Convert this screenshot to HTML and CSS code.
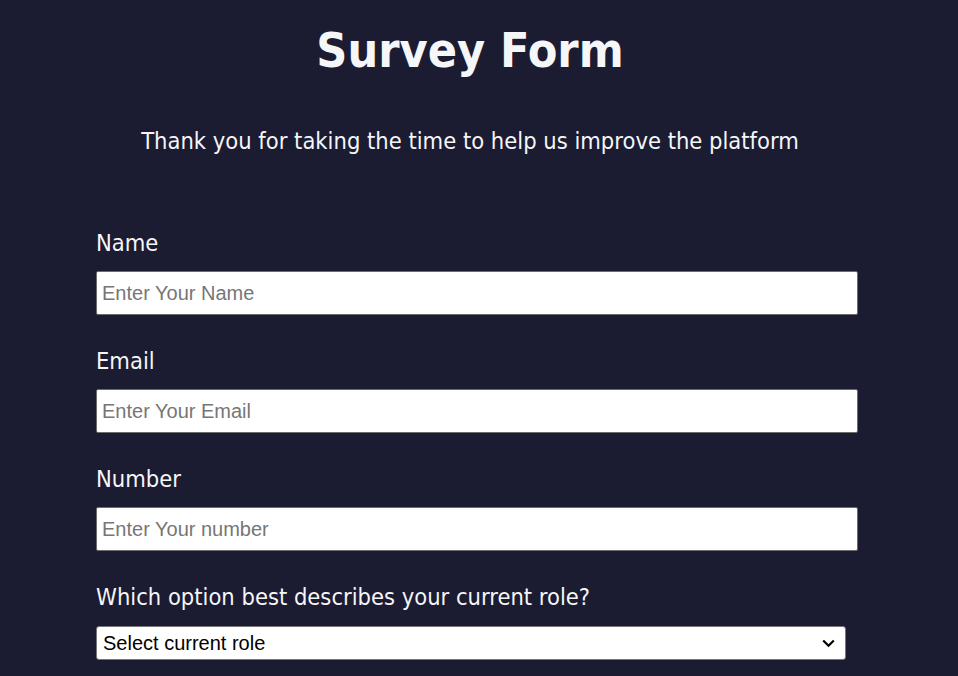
FILE: index.html
```html
<!DOCTYPE html>
<html lang="en">
<head>
<meta charset="utf-8">
<title>Survey Form</title>
<link rel="stylesheet" href="styles.css">
</head>
<body>
  <header class="header">
    <h1 class="title">Survey Form</h1>
    <p class="description">Thank you for taking the time to help us improve the platform</p>
  </header>
  <form class="survey">
    <div class="field">
      <label class="label" for="name">Name</label>
      <input class="text-input" id="name" type="text" placeholder="Enter Your Name">
    </div>
    <div class="field">
      <label class="label" for="email">Email</label>
      <input class="text-input" id="email" type="email" placeholder="Enter Your Email">
    </div>
    <div class="field">
      <label class="label" for="number">Number</label>
      <input class="text-input" id="number" type="number" placeholder="Enter Your number">
    </div>
    <div class="field">
      <label class="label" for="role">Which option best describes your current role?</label>
      <div class="select-wrap">
        <select class="select" id="role">
          <option>Select current role</option>
          <option>Student</option>
          <option>Full Time Job</option>
          <option>Prefer not to say</option>
          <option>Other</option>
        </select>
        <svg class="chevron" width="13" height="9" viewBox="0 0 13 9" aria-hidden="true">
          <path d="M1.2 1.5 L6.5 6.8 L11.8 1.5" fill="none" stroke="#000" stroke-width="2.2"/>
        </svg>
      </div>
    </div>
  </form>
</body>
</html>
```
FILE: styles.css
```css
html, body {
  margin: 0;
  padding: 0;
}
body {
  background: #1b1b32;
  color: #f5f6f7;
  font-family: Tahoma, "DejaVu Sans Condensed", "DejaVu Sans", sans-serif;
  overflow: hidden;
}
.header {
  width: 940px;
  padding-top: 22px;
}
.title {
  margin: 0;
  text-align: center;
  font-size: 48px;
  line-height: 56px;
  font-weight: bold;
}
.description {
  margin: 49px 0 0;
  text-align: center;
  font-size: 23.5px;
  line-height: 28px;
}
.survey {
  width: 766px;
  margin: 74px auto 0;
  display: flex;
  flex-direction: column;
  gap: 32px;
}
.field {
  display: flex;
  flex-direction: column;
  align-items: flex-start;
}
.label {
  font-size: 23.5px;
  line-height: 28px;
  margin-bottom: 14px;
}
.text-input {
  box-sizing: border-box;
  width: 762px;
  height: 44px;
  margin: 0;
  padding: 0 5px;
  border: 1px solid #6b6b6b;
  border-radius: 2px;
  background: #fff;
  font-family: "Liberation Sans", Arial, sans-serif;
  font-size: 20px;
  color: #000;
}
.text-input::placeholder {
  color: #767676;
}
.select-wrap {
  position: relative;
  width: 750px;
  height: 34px;
  margin-top: 1px;
}
.select {
  box-sizing: border-box;
  -webkit-appearance: none;
  appearance: none;
  width: 100%;
  height: 34px;
  margin: 0;
  padding: 0 30px 0 6px;
  border: 1px solid #767676;
  border-radius: 3px;
  background: #fff;
  font-family: "Liberation Sans", Arial, sans-serif;
  font-size: 20px;
  color: #000;
}
.chevron {
  position: absolute;
  right: 11px;
  top: 13px;
  pointer-events: none;
}
```
